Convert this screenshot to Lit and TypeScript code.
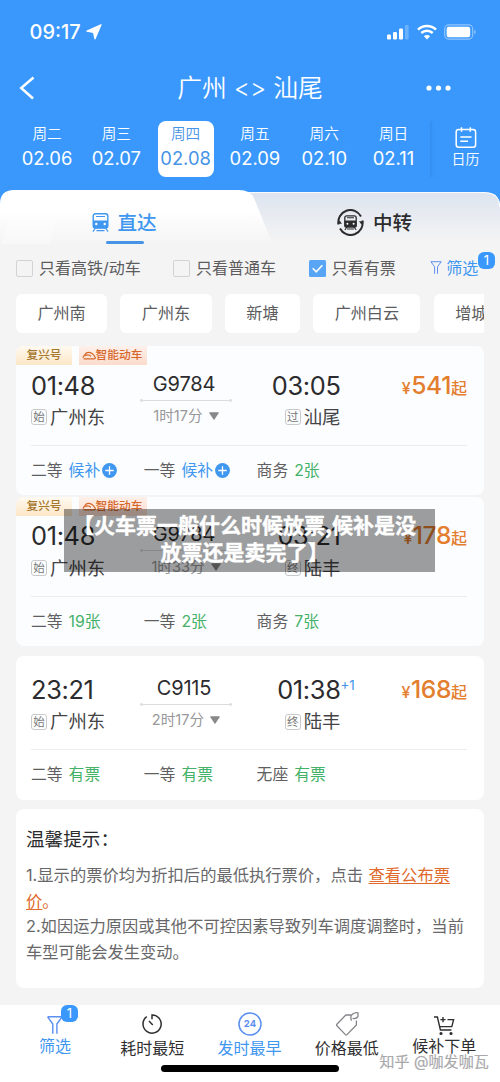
import { LitElement, html, css, svg, nothing } from "lit";
import { customElement, property } from "lit/decorators.js";
import { classMap } from "lit/directives/class-map.js";

interface Seat { name: string; value: string; wait?: boolean }
interface Train {
  tagged?: boolean; dep: string; from: string; no: string; dur: string;
  arr: string; plus?: string; toTag: string; to: string; price: string; seats: Seat[];
}

const trains: Train[] = [
  { tagged: true, dep: "01:48", from: "广州东", no: "G9784", dur: "1时17分", arr: "03:05", toTag: "过", to: "汕尾", price: "541",
    seats: [{ name: "二等", value: "候补", wait: true }, { name: "一等", value: "候补", wait: true }, { name: "商务", value: "2张" }] },
  { tagged: true, dep: "01:48", from: "广州东", no: "G9784", dur: "1时33分", arr: "03:21", toTag: "终", to: "陆丰", price: "178",
    seats: [{ name: "二等", value: "19张" }, { name: "一等", value: "2张" }, { name: "商务", value: "7张" }] },
  { dep: "23:21", from: "广州东", no: "C9115", dur: "2时17分", arr: "01:38", plus: "+1", toTag: "终", to: "陆丰", price: "168",
    seats: [{ name: "二等", value: "有票" }, { name: "一等", value: "有票" }, { name: "无座", value: "有票" }] },
];

const days = [["周二", "02.06"], ["周三", "02.07"], ["周四", "02.08"], ["周五", "02.09"], ["周六", "02.10"], ["周日", "02.11"]];

const funnel = svg`<path d="M1 1H15.5L10.3 8.2V18M1 1L6.2 8.2V18" fill="none" stroke="#5b8ff0" stroke-width="1.4" stroke-linejoin="round"/>`;

@customElement("train-card")
class TrainCard extends LitElement {
  @property({ attribute: false }) train!: Train;

  static styles = css`
    :host { display: block; flex: none; }
    .card { box-sizing: border-box; height: 143.3px; background: #fff; border-radius: 8px; overflow: hidden; padding: 0 17px 0 15px; }
    .card.tagged { height: 149.3px; background: #fcfdff; }
    .tags { display: flex; gap: 7px; height: 19px; margin: 0 0 -13px -15px; font-size: 11.7px; line-height: 19px; white-space: nowrap; }
    .tag { display: flex; align-items: center; justify-content: center; box-sizing: border-box; width: 56px; padding-top: 1px; color: #a5762c; background: linear-gradient(#fffaf1, #fce6c8); font-weight: 500; }
    .tag.smart { width: 68px; gap: 0; padding-right: 2px; color: #d6672a; background: linear-gradient(#fdf0ea, #fcdccd); }
    .main { display: grid; grid-template-columns: 109px 92px 108.5px 1fr; height: 93px; padding-top: 17.8px; box-sizing: border-box; }
    .col { display: flex; flex-direction: column; align-items: flex-start; }
    .mid { align-items: center; }
    .end { align-items: flex-end; }
    .time { position: relative; font-size: 25.4px; line-height: 31px; color: #2c2c2e; letter-spacing: -0.35px; white-space: nowrap; }
    .plus { position: absolute; left: 100%; top: -1.5px; font-size: 13.4px; line-height: 24px; color: #4294e8; letter-spacing: 0; }
    .station { display: flex; align-items: center; gap: 3px; height: 31px; margin-top: 1.2px; font-size: 18.4px; line-height: 31px; color: #444446; white-space: nowrap; }
    .kind { box-sizing: border-box; width: 16px; height: 16px; border: 1px solid #c9c9cb; border-radius: 3px; font-size: 11.5px; line-height: 14px; text-align: center; color: #777; }
    .no { font-size: 20px; line-height: 26px; color: #2c2c2e; letter-spacing: -0.2px; margin: 1px 4px 0 0; }
    .rule { width: 92px; height: 3px; margin: 2px 0 0; }
    .dur { display: flex; align-items: center; gap: 6px; margin-top: 1.2px; font-size: 14.6px; line-height: 26px; color: #98989a; white-space: nowrap; }
    .price { display: flex; align-items: baseline; color: #e37e2f; font-size: 24.6px; line-height: 30px; letter-spacing: -0.4px; font-weight: 500; white-space: nowrap; }
    .yen { font-size: 16px; letter-spacing: 0; margin-right: .5px; font-weight: 500; }
    .from { font-size: 16px; letter-spacing: 0; font-weight: 500; }
    .seats { display: flex; height: 49px; border-top: 1px solid #ebecee; font-size: 15.8px; line-height: 49px; color: #5f5f61; }
    .seat { display: flex; align-items: center; gap: 6px; width: 112.8px; white-space: nowrap; }
    .val { display: flex; align-items: center; gap: 1.5px; color: #44b168; }
    .val.wait { color: #3f97ef; }
  `;

  render() {
    const t = this.train;
    return html`<article class=${classMap({ card: true, tagged: !!t.tagged })}>
      ${t.tagged ? html`<div class="tags"><span class="tag">复兴号</span><span class="tag smart">
        <svg width="14" height="9" viewBox="0 0 14 9"><path d="M.8 6.6C2.6 4.4 3.4 1.4 6 1.4C9 1.4 12 4 13.2 6.2Q13.6 7.8 12 7.8H1.6M3.4 4.8C5 3.4 7 3.6 9 5.2" fill="none" stroke="currentColor" stroke-width="1.2"/></svg>
        智能动车</span></div>` : nothing}
      <div class="main">
        <div class="col"><span class="time">${t.dep}</span><span class="station"><span class="kind">始</span>${t.from}</span></div>
        <div class="col mid"><span class="no">${t.no}</span>
          <svg class="rule" viewBox="0 0 92 3"><path d="M1 1.5H91" stroke="#dcdcde"/><circle cx="1.5" cy="1.5" r="1.4" fill="#dcdcde"/><circle cx="90.5" cy="1.5" r="1.4" fill="#dcdcde"/></svg>
          <span class="dur">${t.dur}<svg width="10" height="8" viewBox="0 0 10 8"><path d="M.6 .8H9.4L5 7.4Z" fill="#88888a" stroke="#88888a" stroke-linejoin="round"/></svg></span></div>
        <div class="col end"><span class="time">${t.arr}${t.plus ? html`<span class="plus">${t.plus}</span>` : nothing}</span>
          <span class="station"><span class="kind">${t.toTag}</span>${t.to}</span></div>
        <div class="col end"><span class="price"><span class="yen">¥</span>${t.price}<span class="from">起</span></span></div>
      </div>
      <div class="seats">${t.seats.map((s) => html`<span class="seat">${s.name}<span class=${classMap({ val: true, wait: !!s.wait })}>${s.value}${s.wait
        ? html`<svg width="15" height="15" viewBox="0 0 15 15"><circle cx="7.5" cy="7.5" r="7.4" fill="#3f97ef"/><path d="M3.3 7.5H11.7M7.5 3.3V11.7" stroke="#fff" stroke-width="1.3"/></svg>` : nothing}</span></span>`)}</div>
    </article>`;
  }
}

@customElement("app-root")
class AppRoot extends LitElement {
  static styles = css`
    :host { display: block; font-family: Inter, "Noto Sans CJK SC", sans-serif; }
    .screen { position: relative; display: flex; flex-direction: column; width: 500px; height: 1082px; overflow: hidden; background: #f4f4f4; }
    .head { flex: none; height: 190px; background: #3a98fd; color: #fff; }
    .status { display: flex; align-items: center; height: 64px; box-sizing: border-box; padding: 0 23px 0 29.5px; }
    .clock { font-size: 20px; font-weight: 500; line-height: 24px; margin-right: 5.5px; }
    .signals { display: flex; align-items: center; gap: 7.3px; margin-left: auto; }
    .nav { display: grid; grid-template-columns: 60px 1fr 60px; align-items: center; height: 48px; padding: 0 18px; }
    .title { text-align: center; font-size: 24.8px; line-height: 48px; font-weight: 350; white-space: nowrap; height: 48px; }
    .dots { justify-self: end; margin-right: 31px; }
    .days { display: grid; grid-template-columns: repeat(6, 69.3px) 1fr; height: 56px; margin-top: 8.5px; padding-left: 12.4px; }
    .day { display: flex; flex-direction: column; align-items: center; width: 56px; height: 56px; justify-self: center; border-radius: 8px; box-sizing: border-box; padding-top: 2.8px; }
    .day.on { background: #fff; color: #4794e6; }
    .week { font-size: 14.6px; line-height: 23px; font-weight: 350; }
    .date { font-size: 18.4px; line-height: 25px; }
    .cal { display: flex; flex-direction: column; align-items: center; padding: 6px 0 0 1px; margin-left: 2px; box-shadow: inset 4px 0 4px -3px #338ae8; font-size: 14px; line-height: 20px; font-weight: 350; }
    .tabs { flex: none; display: grid; height: 58px; background: #3a98fd; }
    .shape { grid-area: 1 / 1; }
    .tabrow { grid-area: 1 / 1; display: grid; grid-template-columns: 250px 250px; height: 58px; }
    .tab { display: flex; align-items: center; justify-content: center; gap: 9px; height: 65px; padding-right: 1px; font-size: 19.6px; line-height: 30px; font-weight: 500; color: #2c2c2e; }
    .tab.on { flex-direction: column; gap: 2.5px; color: #3f97ef; padding: 16.5px 0 0; height: 40px; justify-content: flex-start; }
    .tabname { display: flex; align-items: center; gap: 8.5px; height: 32px; padding-right: 1.5px; }
    .bar { width: 38px; height: 3px; border-radius: 2px; background: #4794e6; }
    .filters { flex: none; display: flex; align-items: center; height: 40px; padding-left: 16px; font-size: 16px; color: #5c5c5e; white-space: nowrap; line-height: 24px; }
    .check { display: flex; align-items: center; gap: 6px; }
    .check.a { width: 157px; } .check.b { width: 135.7px; } .check.c { width: 121px; }
    .box { box-sizing: border-box; width: 17px; height: 17px; border: 1px solid #d3d3d5; border-radius: 2px; }
    .filter { position: relative; display: flex; align-items: center; gap: 4px; color: #3f97ef; }
    .badge { position: absolute; left: 48.3px; top: -4.5px; width: 17px; height: 17px; border-radius: 6px; background: #3a98fd; color: #fff; font-size: 13px; line-height: 17px; text-align: center; }
    .chips { flex: none; display: flex; gap: 13.4px; width: 468px; margin-left: 16px; margin-top: 6.3px; height: 38.4px; overflow: hidden; }
    .chip { flex: none; box-sizing: border-box; padding: 0 21.4px; border-radius: 6px; background: #fff; color: #5c5c5e; font-size: 16.1px; line-height: 38px; white-space: nowrap; }
    .list { flex: none; display: flex; flex-direction: column; margin: 13.3px 16px 0; gap: 1.4px; }
    .list .third { margin-top: 8.9px; }
    .tips { flex: none; box-sizing: border-box; height: 179px; margin: 9.9px 16px 0; border-radius: 8px; background: #fff; padding: 17px 10px 0; color: #68686a; font-size: 16.3px; line-height: 25.7px; white-space: nowrap; }
    .tipname { margin: 0 0 9.5px; color: #2c2c2e; font-size: 18.6px; line-height: 27px; font-weight: 400; }
    .para { margin: 0; }
    .link { color: #e06a2b; text-decoration: underline; text-underline-offset: 2px; }
    .gap { margin-left: 1px; }
    .stop { color: #e06a2b; }
    .foot { position: relative; flex: none; margin-top: auto; height: 77px; background: #fff; }
    .sorts { display: grid; grid-template-columns: repeat(5, 97.3px); padding-left: 6.3px; }
    .sort { position: relative; display: flex; flex-direction: column; align-items: center; padding-top: 6px; font-size: 16px; line-height: 24px; color: #2f2f31; white-space: nowrap; }
    .sort.blue { color: #3f97ef; }
    .icon { width: 26px; height: 26px; margin-bottom: -2.6px; }
    .sort.mid .icon { margin-bottom: -1.5px; }
    .sort .badge { left: 54.5px; top: 0; }
    .home { position: absolute; left: 161px; top: 60px; width: 178px; height: 7px; border-radius: 4px; background: #000; }
    .mark { position: absolute; left: 379.5px; top: 43.5px; font-size: 15.1px; line-height: 26px; color: #a9a9ab; white-space: nowrap; text-shadow: -0.5px -0.5px 0 #e4e4e6; }
    .caption { position: absolute; left: 64px; top: 509px; width: 371px; height: 63px; box-sizing: border-box; padding: 2px 10px 0 0; background: rgba(0, 0, 0, 0.38); color: #fff; text-align: center; font-size: 21px; line-height: 26.5px; font-weight: 700; -webkit-text-stroke: .4px #fff; white-space: nowrap; font-family: "Noto Sans CJK SC", sans-serif; }
  `;

  render() {
    return html`<main class="screen">
      <header class="head">
        <div class="status"><span class="clock">09:17</span>
          <svg width="16" height="16" viewBox="0 0 16 16"><path d="M15 .8L9 14.8L7.6 8.4L1 7.2Z" fill="#fff" stroke="#fff" stroke-width="1.3" stroke-linejoin="round"/></svg>
          <span class="signals">
            <svg width="22" height="16" viewBox="0 0 22 16"><rect x="0" y="10.5" width="4" height="5" rx="1.2" fill="#fff"/><rect x="6" y="8" width="4" height="7.5" rx="1.2" fill="#fff"/><rect x="12" y="4.5" width="4" height="11" rx="1.2" fill="#fff"/><rect x="18" y="1" width="3.6" height="14.5" rx="1.2" fill="#fff" opacity=".25"/></svg>
            <svg width="20" height="16" viewBox="0 0 20 16"><path d="M1 5.6A13 13 0 0 1 19 5.6M4.3 9A8.3 8.3 0 0 1 15.7 9" fill="none" stroke="#fff" stroke-width="2.5"/><path d="M6.9 12.2A4.4 4.4 0 0 1 13.1 12.2L10 15.6Z" fill="#fff"/></svg>
            <svg width="33" height="16" viewBox="0 0 33 16"><rect x=".7" y=".9" width="28" height="14.2" rx="4" fill="none" stroke="#fff" stroke-opacity=".45" stroke-width="1.1"/><rect x="2.6" y="2.8" width="23.6" height="10.4" rx="2.2" fill="#fff"/><path d="M30.4 5.5Q33 8 30.4 10.5Z" fill="#fff" opacity=".5"/></svg>
          </span></div>
        <nav class="nav"><svg width="18" height="24" viewBox="0 0 18 24"><path d="M15.5 1.5L3.2 12L15 22.5" fill="none" stroke="#fff" stroke-width="2.5"/></svg>
          <span class="title">广州 &lt;&gt; 汕尾</span>
          <svg class="dots" width="25" height="6" viewBox="0 0 25 6"><circle cx="3" cy="3" r="2.6" fill="#fff"/><circle cx="12.5" cy="3" r="2.6" fill="#fff"/><circle cx="22" cy="3" r="2.6" fill="#fff"/></svg></nav>
        <div class="days">${days.map(([w, d], i) => html`<div class=${classMap({ day: true, on: i === 2 })}><span class="week">${w}</span><span class="date">${d}</span></div>`)}
          <div class="cal"><svg width="22" height="22" viewBox="0 0 22 22"><rect x="1.2" y="2.6" width="19.4" height="17.6" rx="2.5" fill="none" stroke="#fff" stroke-width="1.5"/><path d="M6.5 .2V4.7M15.3 .2V4.7M5.3 10H16.5M5.3 14.2H13" stroke="#fff" stroke-width="1.5"/></svg>日历</div></div>
      </header>
      <section class="tabs">
        <svg class="shape" width="500" height="58" viewBox="0 0 500 58">
          <defs><linearGradient id="r" x1="0" y1="0" x2="0" y2="1"><stop offset="0" stop-color="#dde4ef"/><stop offset=".9" stop-color="#f4f4f4"/></linearGradient>
          <linearGradient id="l" x1="0" y1="0" x2="0" y2="1"><stop offset=".35" stop-color="#fff"/><stop offset=".95" stop-color="#f4f4f4"/></linearGradient></defs>
          <path d="M200 2.3H485Q500 2.3 500 17V58H200Z" fill="url(#r)"/><path d="M240 2.6H485Q499.6 2.6 499.8 17" fill="none" stroke="#fff"/>
          <path d="M0 58V14Q0 0 14 0H239Q250 0 254 8L274 58Z" fill="url(#l)"/><path d="M12 22L1 54H50L57 22Z" fill="#fff" opacity=".3"/></svg>
        <div class="tabrow">
          <div class="tab on"><span class="tabname"><svg width="17" height="19" viewBox="0 0 17 19"><path d="M3.5 .8H13.5Q15.8 .8 15.8 3.2V12.5Q15.8 15 13.5 15H3.5Q1.2 15 1.2 12.5V3.2Q1.2 .8 3.5 .8Z" fill="none" stroke="#3f97ef" stroke-width="1.4"/><path d="M1 7.6H16V13Q16 15.3 13.5 15.3H3.5Q1 15.3 1 13ZM4 3H13V4H4Z" fill="#3f97ef"/><circle cx="4.3" cy="11" r="1.2" fill="#fff"/><circle cx="12.7" cy="11" r="1.2" fill="#fff"/><path d="M3.4 15L1 18.6M13.6 15L16 18.6M4.5 17.6H12.5" stroke="#3f97ef" stroke-width="1.2"/></svg>直达</span><span class="bar"></span></div>
          <div class="tab"><svg width="27" height="27" viewBox="0 0 27 27" fill="none" stroke="#2c2c2e"><path d="M1.6 15.5A12 12 0 0 1 24 7.5M25.4 11.5A12 12 0 0 1 3 19.5" stroke-width="2"/><path d="M.3 14.8H5L2.6 11.5ZM26.7 12.2H22L24.4 15.5Z" fill="#2c2c2e" stroke="none"/><rect x="7.8" y="6.8" width="11.4" height="11.4" rx="2" stroke-width="1.3"/><path d="M8 12H19V17.5H8Z" fill="#2c2c2e"/><path d="M10 8.8H17M10 18L7.8 21M17 18L19.2 21M10 20H17" stroke-width="1.1"/><circle cx="10.4" cy="14.7" r="1" fill="#fff" stroke="none"/><circle cx="16.6" cy="14.7" r="1" fill="#fff" stroke="none"/></svg>中转</div>
        </div>
      </section>
      <section class="filters">
        <span class="check a"><span class="box"></span>只看高铁/动车</span>
        <span class="check b"><span class="box"></span>只看普通车</span>
        <span class="check c"><svg width="17" height="17" viewBox="0 0 17 17"><rect width="17" height="17" rx="1.5" fill="#58a4f5"/><path d="M3.7 8.3L7.2 11.8L13.4 5.2" fill="none" stroke="#fff" stroke-width="1.6"/></svg>只看有票</span>
        <span class="filter"><svg width="12.5" height="13.5" viewBox="0 0 17 19">${funnel}</svg>筛选<span class="badge">1</span></span>
      </section>
      <div class="chips">${["广州南", "广州东", "新塘", "广州白云", "增城"].map((c) => html`<span class="chip">${c}</span>`)}</div>
      <section class="list">${trains.map((t, i) => html`<train-card class=${i === 2 ? "third" : ""} .train=${t}></train-card>`)}</section>
      <section class="tips"><h2 class="tipname">温馨提示：</h2>
        <p class="para">1.显示的票价均为折扣后的最低执行票价，点击 <span class="link gap">查看公布票</span><br><span class="link">价</span><span class="stop">。</span></p>
        <p class="para">2.如因运力原因或其他不可控因素导致列车调度调整时，当前<br>车型可能会发生变动。</p></section>
      <footer class="foot">
        <div class="sorts">
          <span class="sort blue"><svg class="icon" viewBox="0 0 26 26"><g transform="translate(4.6 4.8)">${funnel}</g></svg>筛选<span class="badge">1</span></span>
          <span class="sort mid"><svg class="icon" viewBox="0 0 26 26" fill="none" stroke="#2f2f31" stroke-width="1.5"><path d="M7.8 5.6A9.1 9.1 0 1 0 13 3.9V8.3M10 10L13.8 14"/></svg>耗时最短</span>
          <span class="sort mid blue"><svg class="icon" viewBox="0 0 26 26"><circle cx="13" cy="13" r="11" fill="none" stroke="#5b8ff0" stroke-width="1.5"/><text x="13" y="16.4" font-size="9.5" font-weight="700" text-anchor="middle" fill="#5b8ff0">24</text></svg>发时最早</span>
          <span class="sort mid"><svg class="icon" viewBox="0 0 26 26" fill="none" stroke="#85858a" stroke-width="1.3" stroke-linejoin="round"><path d="M17.2 4H11.8L2.9 13.2Q2.3 14 2.9 14.8L11.2 23.4Q12.2 24.2 13.2 23.4L22.4 14V9.4M17.6 9.6Q15.6 5.6 18.4 3.2Q21 1 24 1.8V5.4Q22.6 8.2 18.6 7.4"/></svg>价格最低</span>
          <span class="sort"><svg class="icon" viewBox="0 0 26 26" fill="none" stroke="#2f2f31" stroke-width="1.4"><path d="M3 6H6.4L9.4 19H20.4M16.5 8.6H22.6L20.8 15.6H8.6M12 6V11.2M9.4 8.6H14.6"/><circle cx="10" cy="22.5" r=".9" fill="#2f2f31"/><circle cx="20" cy="22.5" r=".9" fill="#2f2f31"/></svg>候补下单</span>
        </div>
        <div class="home"></div><span class="mark">知乎 @咖发咖瓦</span>
      </footer>
      <div class="caption">【火车票一般什么时候放票,候补是没<br>放票还是卖完了】</div>
    </main>`;
  }
}
